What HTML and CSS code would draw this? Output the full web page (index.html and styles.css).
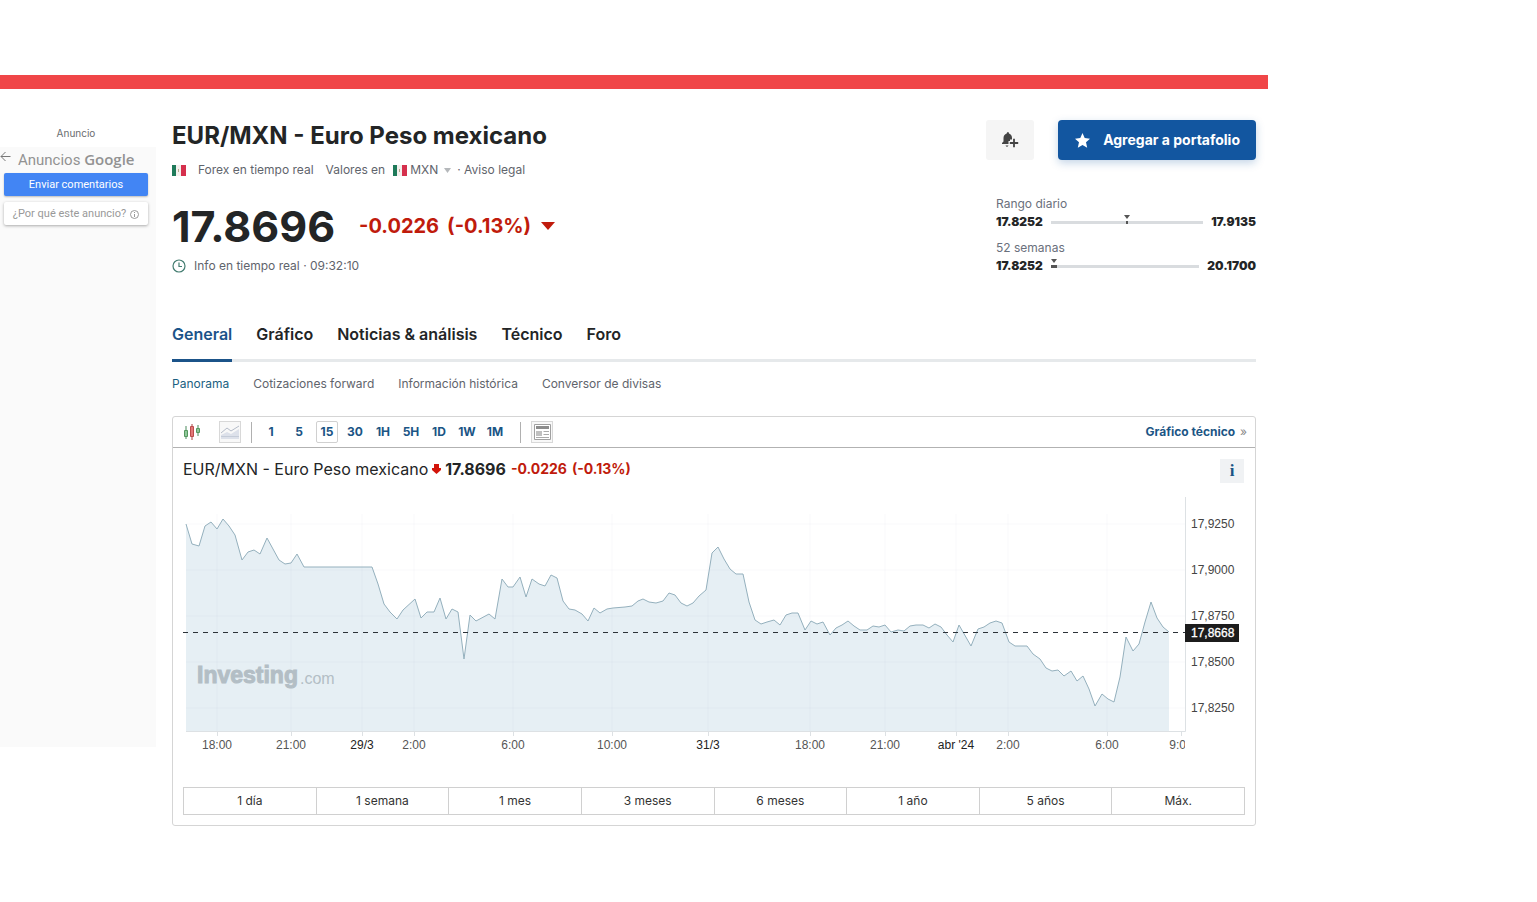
FILE: index.html
```html
<!DOCTYPE html>
<html lang="es">
<head>
<meta charset="utf-8">
<title>EUR/MXN - Euro Peso mexicano</title>
<link rel="stylesheet" href="styles.css">
</head>
<body>
<div class="page">
  <div class="banner"></div>
  <div class="columns">
    <aside class="ad">
      <p class="ad-label">Anuncio</p>
      <div class="ad-box">
        <div class="ad-brand">
          <svg class="ad-back" width="11" height="11" viewBox="0 0 11 11"><path d="M10.500 5.500H1M5.500 1L1 5.500L5.500 10" fill="none" stroke="#777" stroke-width="1"/></svg>
          <span>Anuncios <b>Google</b></span>
        </div>
        <button class="ad-send">Enviar comentarios</button>
        <button class="ad-why">¿Por qué este anuncio?
          <svg width="9" height="9" viewBox="0 0 9 9"><circle cx="4.500" cy="4.500" r="4" fill="none" stroke="#999"/><path d="M4.500 4v3M4.500 2v1" stroke="#999"/></svg>
        </button>
      </div>
    </aside>

    <main class="main">
      <header class="head">
        <div class="quote">
          <h1 class="title">EUR/MXN - Euro Peso mexicano</h1>
          <div class="meta">
            <svg class="flag" width="14" height="11" viewBox="0 0 14 11"><path fill="#f4f1ee" d="M0 0h14v11H0z"/><path fill="#1f7a5a" d="M0 0h4v11H0z"/><path fill="#d5304d" d="M9 0h5v11H9z"/><path fill="#b9a98c" d="M6 4h1v3H6z"/></svg>
            <span class="meta-market">Forex en tiempo real</span>
            <span class="meta-values">Valores en</span>
            <button class="currency">
              <svg class="flag" width="14" height="11" viewBox="0 0 14 11"><path fill="#f4f1ee" d="M0 0h14v11H0z"/><path fill="#1f7a5a" d="M0 0h4v11H0z"/><path fill="#d5304d" d="M9 0h5v11H9z"/><path fill="#b9a98c" d="M6 4h1v3H6z"/></svg>
              MXN
              <svg class="caret" width="7" height="5" viewBox="0 0 7 5"><path fill="#b5b8bb" d="M0 0h7L3.500 5z"/></svg>
            </button>
            <a class="legal" href="#">· Aviso legal</a>
          </div>
          <div class="price-row">
            <span class="price">17.8696</span>
            <span class="change">-0.0226</span>
            <span class="change change-pct">(-0.13%)</span>
            <svg width="14" height="8" viewBox="0 0 14 8"><path fill="#c01b0c" d="M0 0h14L7 8z"/></svg>
          </div>
          <div class="clock-row">
            <svg width="14" height="14" viewBox="0 0 14 14"><circle cx="7" cy="7" r="6" fill="none" stroke="#437c70" stroke-width="1.200"/><path d="M7 3.500V7.500H10" fill="none" stroke="#437c70" stroke-width="1.200"/></svg>
            <span>Info en tiempo real · 09:32:10</span>
          </div>
        </div>
        <div class="side">
          <div class="actions">
            <button class="bell" aria-label="Crear alerta">
              <svg width="18" height="18" viewBox="0 0 18 18"><path fill="#444" d="M7 1Q8 1 8 2.500Q11 3.500 11 7V8.500H9V10H7.500V13H1V12L2.500 10.500V7Q2.500 3.500 5.700 2.500Q5.700 1 7 1zM4.500 14.500H7.500Q6 17 4.500 14.500z"/><path stroke="#444" stroke-width="1.800" d="M13 7.800v8.400M8.800 12h8.400"/></svg>
            </button>
            <button class="add">
              <svg width="15" height="15" viewBox="0 0 15 15"><path fill="#fff" d="M7.500 0L9.700 5.100L15 5.700L11 9.300L12.200 14.700L7.500 11.900L2.800 14.700L4 9.300L0 5.700L5.300 5.100z"/></svg>
              Agregar a portafolio
            </button>
          </div>
          <div class="ranges">
            <div class="range">
              <span class="range-name">Rango diario</span>
              <div class="range-row"><b>17.8252</b><span class="track"><svg class="mark" style="left:50%" width="6" height="9" viewBox="0 0 6 9"><path fill="#555" d="M0 0h6L3 4zM2 6h2v3H2z"/></svg></span><b>17.9135</b></div>
            </div>
            <div class="range">
              <span class="range-name">52 semanas</span>
              <div class="range-row"><b>17.8252</b><span class="track"><svg class="mark" style="left:2%" width="6" height="9" viewBox="0 0 6 9"><path fill="#555" d="M0 0h6L3 4zM0 6h6v3H0z"/></svg></span><b>20.1700</b></div>
            </div>
          </div>
        </div>
      </header>

      <nav class="tabs">
        <a class="tab tab-on" href="#">General</a>
        <a class="tab" href="#">Gráfico</a>
        <a class="tab" href="#">Noticias &amp; análisis</a>
        <a class="tab" href="#">Técnico</a>
        <a class="tab" href="#">Foro</a>
      </nav>
      <nav class="subtabs">
        <a class="sub-on" href="#">Panorama</a>
        <a href="#">Cotizaciones forward</a>
        <a href="#">Información histórica</a>
        <a href="#">Conversor de divisas</a>
      </nav>

      <section class="card">
        <div class="toolbar">
          <button class="tool" aria-label="Velas">
            <svg width="18" height="18" viewBox="0 0 18 18"><path d="M3 3v13M15 2v11" stroke="#4a8a5c"/><path d="M9 1v16" stroke="#a84040"/><path fill="#8fc89a" stroke="#55985f" d="M1.500 7.500h3v6h-3zM13.500 5.500h3v4h-3z"/><path fill="#e27878" stroke="#bb4c4c" d="M7.500 3.500h3v10h-3z"/></svg>
          </button>
          <button class="tool tool-box tool-area" aria-label="Área">
            <svg width="18" height="16" viewBox="0 0 18 16"><path fill="#dde1ea" d="M0 11L6 8L10 10L18 5V15H0z"/><path d="M0 9L6 4L10 7L18 2" fill="none" stroke="#b4bbc8"/><path d="M0 12.500H18" stroke="#c5ccd8"/></svg>
          </button>
          <span class="rule"></span>
          <div class="steps">
            <button class="step">1</button><button class="step">5</button><button class="step step-on">15</button><button class="step">30</button><button class="step">1H</button><button class="step">5H</button><button class="step">1D</button><button class="step">1W</button><button class="step">1M</button>
          </div>
          <span class="rule"></span>
          <button class="tool tool-box tool-news" aria-label="Noticias">
            <svg width="17" height="16" viewBox="0 0 17 16"><path fill="#fff" stroke="#a0a0a0" d="M.5 .5h16v15H.5z"/><path fill="#8c8c8c" d="M2 2h13v3H2z"/><path fill="#c0c0c0" d="M2 7h6v5H2z"/><path stroke="#aaa" d="M9.500 7.500h5.500M9.500 10.500h5.500M2 13.500h13"/></svg>
          </button>
          <a class="technical" href="#">Gráfico técnico <span>»</span></a>
        </div>
        <div class="card-body">
          <div class="chart-head">
            <span class="chart-name">EUR/MXN - Euro Peso mexicano</span>
            <svg width="9" height="10" viewBox="0 0 9 10"><path fill="#d2140a" d="M2 0h5v4h2v2L4.500 10L0 6V4h2z"/></svg>
            <b class="chart-price">17.8696</b>
            <b class="chart-change">-0.0226</b>
            <b class="chart-change">(-0.13%)</b>
            <button class="info">i</button>
          </div>
          <svg class="chart" viewBox="183 490 1062 268">
            <defs>
              <clipPath id="time"><path d="M183 732H1185V758H183z"/></clipPath>
            </defs>
            <path class="area" d="M186 731V524L192 544L199 546L205 526L211 522L217 529L223 519L229 526L235 535L242 560L248 552L254 550L260 554L267 538L273 549L279 560L285 564L291 563L297 554L304 567H372L378 584L384 604L390 612L397 619L403 610L415 599L421 618L427 612H434L440 598L446 619L452 609L458 612L464 659L470 615L476 621L489 614L495 619L502 579L508 587H513L520 577L526 597L532 579L539 584L545 586L551 575L557 578L563 601L569 609L575 610L582 614L588 621L594 608L600 613L607 609L613 608L625 607L632 606L638 601L643 599L649 602L656 603L663 601L669 593L675 595L681 603L687 606L693 603L699 596L706 590L712 553L718 547L724 559L730 569L736 574H743L749 602L755 620L761 624L767 622L774 620L780 625L786 615L792 613H798L805 630L811 621L817 624L823 622L830 635L836 628L842 625L848 621L854 626L860 630H867L873 626L879 627L885 625L891 632L898 630L904 631L910 626L916 625H923L929 628L935 624L941 627L947 635L953 642L959 625L971 646L978 629L984 627L990 623L996 621L1002 623L1009 642L1015 646H1027L1033 654L1040 659L1046 668L1052 671L1058 670L1064 676L1071 671L1077 681L1083 676L1089 689L1095 706L1102 694L1108 699L1114 702L1120 677L1126 637L1133 651L1139 644L1145 622L1151 602L1157 618L1163 627L1169 632V731z"/>
            <path class="grid" d="M186 524H1185M186 570H1185M186 616H1185M186 662H1185M186 708H1185M217 514V731M291 514V731M362 514V731M414 514V731M513 514V731M612 514V731M708 514V731M810 514V731M885 514V731M956 514V731M1008 514V731M1107 514V731"/>
            <path class="line" d="M186 524L192 544L199 546L205 526L211 522L217 529L223 519L229 526L235 535L242 560L248 552L254 550L260 554L267 538L273 549L279 560L285 564L291 563L297 554L304 567H372L378 584L384 604L390 612L397 619L403 610L415 599L421 618L427 612H434L440 598L446 619L452 609L458 612L464 659L470 615L476 621L489 614L495 619L502 579L508 587H513L520 577L526 597L532 579L539 584L545 586L551 575L557 578L563 601L569 609L575 610L582 614L588 621L594 608L600 613L607 609L613 608L625 607L632 606L638 601L643 599L649 602L656 603L663 601L669 593L675 595L681 603L687 606L693 603L699 596L706 590L712 553L718 547L724 559L730 569L736 574H743L749 602L755 620L761 624L767 622L774 620L780 625L786 615L792 613H798L805 630L811 621L817 624L823 622L830 635L836 628L842 625L848 621L854 626L860 630H867L873 626L879 627L885 625L891 632L898 630L904 631L910 626L916 625H923L929 628L935 624L941 627L947 635L953 642L959 625L971 646L978 629L984 627L990 623L996 621L1002 623L1009 642L1015 646H1027L1033 654L1040 659L1046 668L1052 671L1058 670L1064 676L1071 671L1077 681L1083 676L1089 689L1095 706L1102 694L1108 699L1114 702L1120 677L1126 637L1133 651L1139 644L1145 622L1151 602L1157 618L1163 627L1169 632"/>
            <path class="axis" d="M1185.500 497V731.500H186M217.500 732v4M291.500 732v4M362.500 732v4M414.500 732v4M513.500 732v4M612.500 732v4M708.500 732v4M810.500 732v4M885.500 732v4M956.500 732v4M1008.500 732v4M1107.500 732v4M1181.500 732v4"/>
            <path class="last" d="M183 632.500H1185"/>
            <text class="mark-brand" x="197" y="683">Investing</text>
            <text class="mark-com" x="300" y="684">.com</text>
            <g class="values">
              <text x="1191" y="528">17,9250</text>
              <text x="1191" y="574">17,9000</text>
              <text x="1191" y="620">17,8750</text>
              <text x="1191" y="666">17,8500</text>
              <text x="1191" y="712">17,8250</text>
            </g>
            <path fill="#1c1c1c" d="M1185 624H1239V642H1185z"/>
            <text class="last-value" x="1191" y="637">17,8668</text>
            <g class="times" clip-path="url(#time)">
              <text x="217" y="749">18:00</text>
              <text x="291" y="749">21:00</text>
              <text class="day" x="362" y="749">29/3</text>
              <text x="414" y="749">2:00</text>
              <text x="513" y="749">6:00</text>
              <text x="612" y="749">10:00</text>
              <text class="day" x="708" y="749">31/3</text>
              <text x="810" y="749">18:00</text>
              <text x="885" y="749">21:00</text>
              <text class="day" x="956" y="749">abr '24</text>
              <text x="1008" y="749">2:00</text>
              <text x="1107" y="749">6:00</text>
              <text x="1181" y="749">9:00</text>
            </g>
          </svg>
          <div class="periods">
            <button>1 día</button><button>1 semana</button><button>1 mes</button><button>3 meses</button><button>6 meses</button><button>1 año</button><button>5 años</button><button>Máx.</button>
          </div>
        </div>
      </section>
    </main>
  </div>
</div>
</body>
</html>
```

FILE: styles.css
```css
* { box-sizing: border-box; }
body { margin: 0; background: #fff; color: #232526; font-family: Inter, "Liberation Sans", sans-serif; font-size: 12px; line-height: 16px; }
button { margin: 0; padding: 0; border: 0; background: none; color: inherit; font: inherit; cursor: pointer; }
a { color: inherit; text-decoration: none; }
svg { display: block; flex: none; }

.page { max-width: 1268px; padding-top: 75px; }
.banner { height: 14px; background: #f04648; }
.columns { display: flex; gap: 16px; padding-right: 12px; }

.ad { flex: none; width: 156px; padding-top: 36px; font-family: Roboto, "Liberation Sans", sans-serif; }
.ad-label { margin: 0; padding-right: 4px; color: #6a6d70; font-family: Inter, sans-serif; font-size: 10px; text-align: center; }
.ad-box { display: flex; flex-direction: column; height: 600px; margin-top: 6px; padding: 3px 8px 0 4px; background: #fafafa; }
.ad-brand { display: flex; gap: 7px; height: 23px; margin-left: -4px; color: #929292; font-size: 15px; line-height: 20px; }
.ad-back { margin-top: 1px; }
.ad-brand b { font-family: "Open Sans", sans-serif; font-weight: 600; line-height: 16px; }
.ad-send { height: 23px; padding-top: 1px; border-radius: 2px; background: #4285f4; color: #fff; font-size: 11px; box-shadow: 0 1px 2px #bbb; }
.ad-why { display: flex; align-items: center; justify-content: center; gap: 4px; height: 23px; margin-top: 6px; padding-top: 1px; border-radius: 2px; background: #fff; color: #999; font-size: 11px; box-shadow: 0 1px 3px #aaa; }

.main { flex: 1; min-width: 0; padding-top: 31px; }
.head { display: flex; justify-content: space-between; }
.title { margin: 0; font-size: 24px; line-height: 32px; }
.meta { display: flex; align-items: center; margin-top: 10px; color: #5f646c; }
.meta-market { margin-left: 12px; }
.meta-values { margin-left: 12px; }
.currency { display: flex; align-items: center; gap: 3px; margin-left: 8px; }
.caret { margin-left: 3px; }
.legal { margin-left: 6px; }
.price-row { display: flex; align-items: center; height: 48px; margin-top: 24px; }
.price { font-size: 43px; font-weight: 700; line-height: 48px; }
.change { margin-left: 24px; color: #c01b0c; font-size: 20px; font-weight: 700; line-height: 24px; }
.change-pct { margin: 0 10px 0 8px; }
.clock-row { display: flex; align-items: center; gap: 8px; margin-top: 8px; color: #5f646c; }

.side { display: flex; flex-direction: column; align-items: flex-end; }
.actions { display: flex; gap: 24px; }
.bell { display: grid; place-items: center; width: 48px; height: 40px; border-radius: 3px; background: #f5f5f5; }
.add { display: flex; align-items: center; justify-content: space-between; width: 198px; height: 40px; padding: 0 16px 0 17px; border-radius: 4px; background: #1256a0; color: #fff; font-size: 14px; font-weight: 700; box-shadow: 0 3px 8px #1256a040; }
.ranges { display: flex; flex-direction: column; gap: 8px; width: 260px; margin-top: 35px; }
.range { display: flex; flex-direction: column; }
.range-name { line-height: 18px; color: #6a707c; }
.range-row { display: flex; align-items: center; gap: 8px; line-height: 18px; font-weight: 700; }
.track { position: relative; flex: 1; height: 3px; background: #d9dcdf; }
.mark { position: absolute; bottom: 0; margin-left: -3px; }

.tabs { display: flex; gap: 24px; margin-top: 47px; border-bottom: 3px solid #e6e9eb; font-size: 16px; font-weight: 600; line-height: 24px; }
.tab { margin-bottom: -3px; padding-bottom: 13px; border-bottom: 3px solid transparent; }
.tab-on { color: #1b5389; border-color: #1b5389; }
.subtabs { display: flex; gap: 24px; margin-top: 14px; color: #5f646c; }
.sub-on { color: #1b5f82; }

.card { margin-top: 24px; border: 1px solid #d5d5d5; border-radius: 3px; }
.toolbar { display: flex; align-items: center; height: 31px; padding: 0 8px 0 10px; border-bottom: 1px solid #b2b2b2; }
.tool { display: grid; place-items: center; flex: none; }
.tool-box { width: 22px; height: 22px; border: 1px solid #d8d8d8; background: #f8f8f8; }
.tool-area { margin: 0 10px 0 18px; }
.tool-news { margin-left: 10px; }
.rule { width: 1px; height: 21px; background: #b0b0b0; }
.steps { display: flex; gap: 6px; margin: 0 14px 0 8px; }
.step { width: 22px; height: 22px; border: 1px solid transparent; color: #1b5585; font-weight: 700; }
.step-on { border-color: #d0d0d0; border-radius: 2px; }
.technical { margin-left: auto; color: #1b5585; font-weight: 700; }
.technical span { margin-left: 2px; color: #888; font-weight: 400; }
.card-body { padding: 0 10px 10px; }
.chart-head { display: flex; align-items: center; gap: 5px; height: 42px; }
.chart-name { font-size: 16px; }
.chart-head svg { margin: 0 -1px; }
.chart-price { font-size: 16px; }
.chart-change { color: #c01b0c; font-size: 14px; }
.info { width: 24px; height: 24px; margin: 4px 1px 0 auto; background: #f0f2f4; color: #1b5585; font: 700 17px "Liberation Serif", serif; }

.chart { width: 100%; height: auto; font-family: "Liberation Sans", sans-serif; font-size: 12px; }
.area { fill: #e6eff4; }
.grid { fill: none; stroke: #8090a0; stroke-opacity: .05; }
.line { fill: none; stroke: #94b0bd; stroke-width: 1; }
.axis { fill: none; stroke: #dde1e4; }
.last { stroke: #2c3238; stroke-dasharray: 5 5; }
.mark-brand { fill: #b3bec5; stroke: #b3bec5; font-size: 23px; font-weight: 700; }
.mark-com { fill: #b3bec5; font-size: 16px; }
.values { fill: #444; }
.last-value { fill: #fff; stroke: #fff; stroke-width: .3; }
.times { fill: #555; text-anchor: middle; }
.day { fill: #222; }

.periods { display: flex; margin-top: 29px; border: 1px solid #d0d0d0; }
.periods button { flex: 1; height: 26px; border-left: 1px solid #d0d0d0; color: #333; }
.periods button:first-child { border-left: 0; }
```
